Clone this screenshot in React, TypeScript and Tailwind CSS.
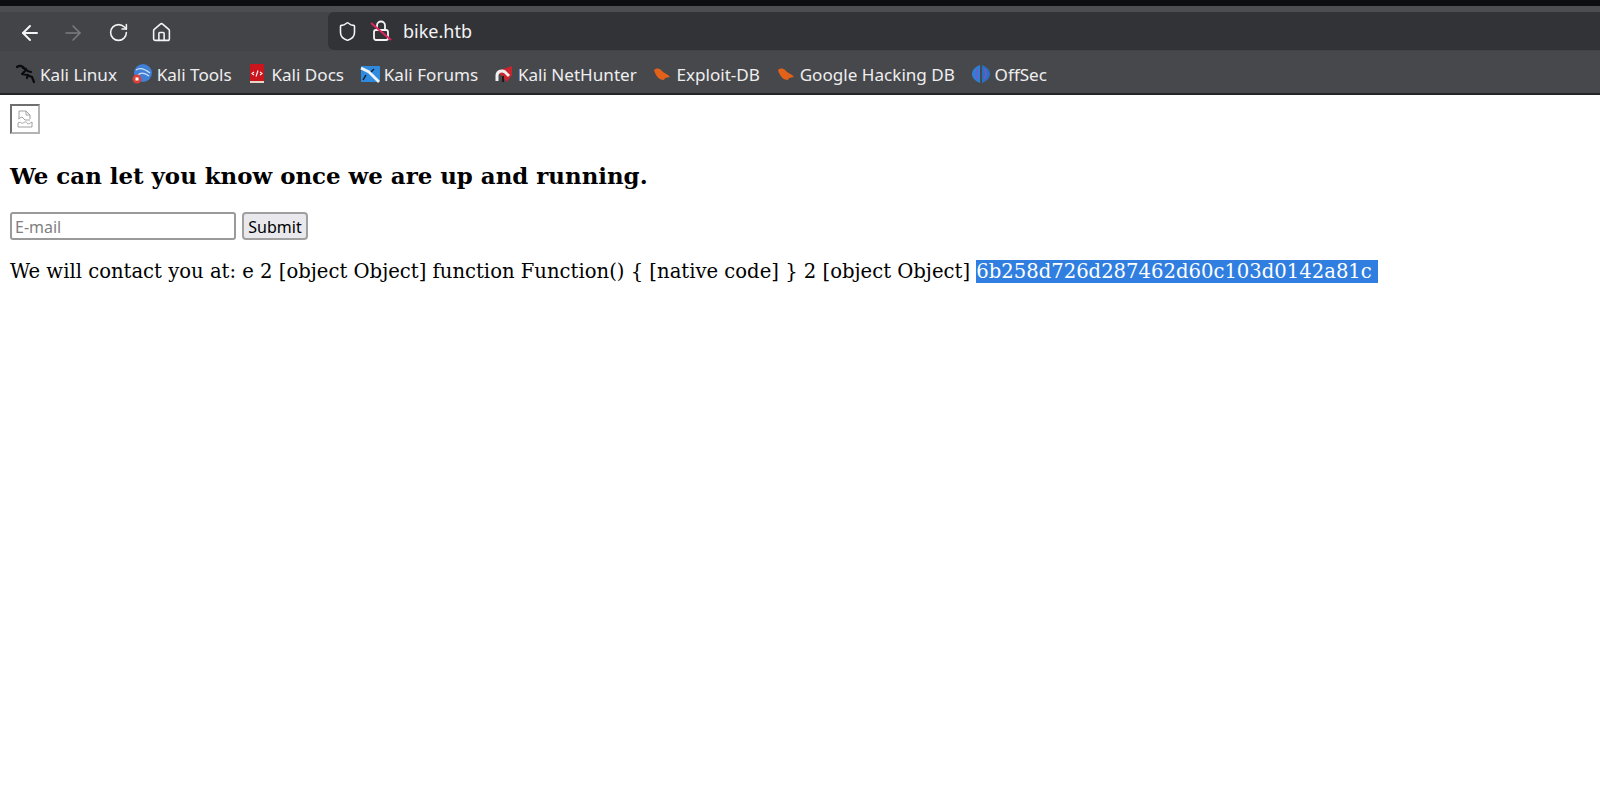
import * as React from "react";
import { ArrowLeft, ArrowRight, RotateCw, Home, Shield } from "lucide-react";

const uiFont = { fontFamily: '"Noto Sans", "Open Sans", sans-serif' };

function KaliIcon() {
  return (
    <svg width="22" height="22" viewBox="0 0 22 22" fill="none" stroke="#0b0b0e" strokeWidth="2.2" strokeLinecap="round" strokeLinejoin="round">
      <path d="M2 4c3-2 6-1 8 2 2 2 4 3 6 3M8 5l3 1M10 8l-3 3 5 1 5 2 2 5M13 12l-1 3" />
    </svg>
  );
}

function ToolsIcon() {
  return (
    <svg width="22" height="22" viewBox="0 0 22 22">
      <circle cx="11" cy="10" r="9" fill="#3f7fd6" />
      <path d="M4 7c4-3 9-1 14 3M6 12c3-3 7-2 11 1" stroke="#cfe0f5" strokeWidth="1.2" fill="none" />
      <circle cx="5" cy="16" r="4.5" fill="#d8413a" />
      <rect x="3.5" y="14.5" width="3" height="3" fill="#fff" />
    </svg>
  );
}

function DocsIcon() {
  return (
    <svg width="22" height="22" viewBox="0 0 22 22">
      <rect x="4" y="1" width="14" height="17" fill="#c9151b" />
      <rect x="4" y="18" width="14" height="2" fill="#e8d5c8" />
      <path d="M8 9l-2 1.5L8 12M14 9l2 1.5-2 1.5M12 7.5l-2 6" stroke="#fff" strokeWidth="1.1" fill="none" />
    </svg>
  );
}

function ForumsIcon() {
  return (
    <svg width="22" height="22" viewBox="0 0 22 22">
      <rect x="2" y="3" width="19" height="16" rx="1" fill="#2f8be0" />
      <path d="M2 5l8 4 10 10" stroke="#f1f4f7" strokeWidth="2.8" fill="none" />
      <path d="M7 12l-3 5M12 9l3-3" stroke="#14181d" strokeWidth="1.4" />
    </svg>
  );
}

function NetHunterIcon() {
  return (
    <svg width="22" height="22" viewBox="0 0 22 22">
      <path d="M4 8l15-5v9l-5 7z" fill="#c9252f" />
      <path d="M4 18V12a5 5 0 0 1 8-3l4 4" stroke="#f0f0f0" strokeWidth="3" fill="none" />
      <path d="M10 19v-6" stroke="#1c1c20" strokeWidth="2" />
    </svg>
  );
}

function BugIcon() {
  return (
    <svg width="22" height="22" viewBox="0 0 22 22">
      <path d="M3 7c2-2 5-2 7 0l2 2 5 3 2 2-5 1-1 2c-4 0-8-3-10-10z" fill="#e4611a" />
    </svg>
  );
}

function OffSecIcon() {
  return (
    <svg width="22" height="22" viewBox="0 0 22 22">
      <path d="M10 2C5 4 2 7 2 11s3 7 8 9z" fill="#2f7fd8" />
      <path d="M12 2c5 2 8 5 8 9s-3 7-8 9z" fill="#2a6fc0" />
      <path d="M7 6c-1 3-1 7 0 10M15 6c1 3 1 7 0 10" stroke="#7b55c9" strokeWidth="1.6" fill="none" />
    </svg>
  );
}

function InsecureLock() {
  return (
    <svg width="22" height="24" viewBox="0 0 22 24" fill="none">
      <path d="M7 11V6.5a4 4 0 0 1 8 0V11" stroke="#f4f4f5" strokeWidth="1.8" />
      <rect x="4" y="11" width="14" height="10" rx="2" stroke="#f4f4f5" strokeWidth="1.8" />
      <path d="M1 4l20 17" stroke="#e0245e" strokeWidth="2" />
    </svg>
  );
}

const bookmarks = [
  { label: "Kali Linux", icon: <KaliIcon /> },
  { label: "Kali Tools", icon: <ToolsIcon /> },
  { label: "Kali Docs", icon: <DocsIcon /> },
  { label: "Kali Forums", icon: <ForumsIcon /> },
  { label: "Kali NetHunter", icon: <NetHunterIcon /> },
  { label: "Exploit-DB", icon: <BugIcon /> },
  { label: "Google Hacking DB", icon: <BugIcon /> },
  { label: "OffSec", icon: <OffSecIcon /> },
];

function BrokenImage() {
  return (
    <div className="flex h-[30px] w-[30px] items-center justify-center border-2 border-[#b4b4b4] border-t-[#6f6f6f] border-l-[#6f6f6f]">
      <svg width="16" height="18" viewBox="0 0 16 18" fill="none" stroke="#a0a0a0" strokeWidth="1">
        <path d="M2 8V1h7l4 4v4M9 1v4h4" />
        <path d="M1 9l4-2 3 3M8 10h5" />
        <path d="M1 13c3-2 3 1 5 0s3-2 4 0 3 0 5-1v5H1z" />
      </svg>
    </div>
  );
}

export default function App() {
  return (
    <div className="flex h-[790px] w-[1600px] flex-col overflow-hidden bg-white">
      <div className="h-[6px] bg-[#0c0d11]" />

      <div style={uiFont}>
        <div className="flex h-[45px] border-t-[6px] border-[#4c4d51] bg-[#434448] text-[#f4f4f5]">
          <div className="flex w-[328px] items-center pl-[18px] pt-[2px]">
            <ArrowLeft size={24} strokeWidth={2} className="mr-[19px]" />
            <ArrowRight size={24} strokeWidth={1.5} className="mr-[23px] text-[#7b7c80]" />
            <RotateCw size={21} strokeWidth={1.8} className="mr-[22px]" />
            <Home size={21} strokeWidth={1.8} />
          </div>
          <div className="flex h-[38px] flex-1 items-center rounded-l-[6px] bg-[#323337] pl-[9px]">
            <Shield size={21} strokeWidth={1.8} className="mr-[12px]" />
            <div className="mr-[11px]">
              <InsecureLock />
            </div>
            <span className="text-[18px] leading-none">bike.htb</span>
          </div>
        </div>

        <div className="flex h-[42px] items-center gap-[14.7px] bg-[#47484c] pl-[15px] pt-[5px] text-[17.1px] text-[#eeeeef]">
          {bookmarks.map((b) => (
            <div key={b.label} className="flex items-center gap-[3px] whitespace-nowrap">
              {b.icon}
              <span>{b.label}</span>
            </div>
          ))}
        </div>
        <div className="h-[2px] bg-[#232428]" />
      </div>

      <div className="px-[10px] pt-[9px] text-black" style={{ fontFamily: '"DejaVu Serif", serif' }}>
        <BrokenImage />
        <h3 className="mt-[27px] text-[22.9px] font-bold leading-[30px]">We can let you know once we are up and running.</h3>
        <form className="mt-[21px] flex items-center gap-[6px]" style={uiFont}>
          <input
            placeholder="E-mail"
            className="h-[28px] w-[226px] rounded-[3px] border-2 border-[#9a9a9a] px-[3px] pt-[2px] text-[16px] placeholder:text-[#808080]"
          />
          <button type="button" className="h-[28px] w-[66px] rounded-[4px] border-2 border-[#a0a0a0] bg-[#e9e9ed] pt-[1px] text-[16px] text-black">
            Submit
          </button>
        </form>
        <p className="mt-[19px] whitespace-nowrap text-[19.6px] leading-[26px]">
          We will contact you at: e 2 [object Object] function Function() {"{"} [native code] {"}"} 2 [object Object]{" "}
          <span className="bg-[#2f7ee0] text-white">6b258d726d287462d60c103d0142a81c&nbsp;</span>
        </p>
      </div>
    </div>
  );
}
